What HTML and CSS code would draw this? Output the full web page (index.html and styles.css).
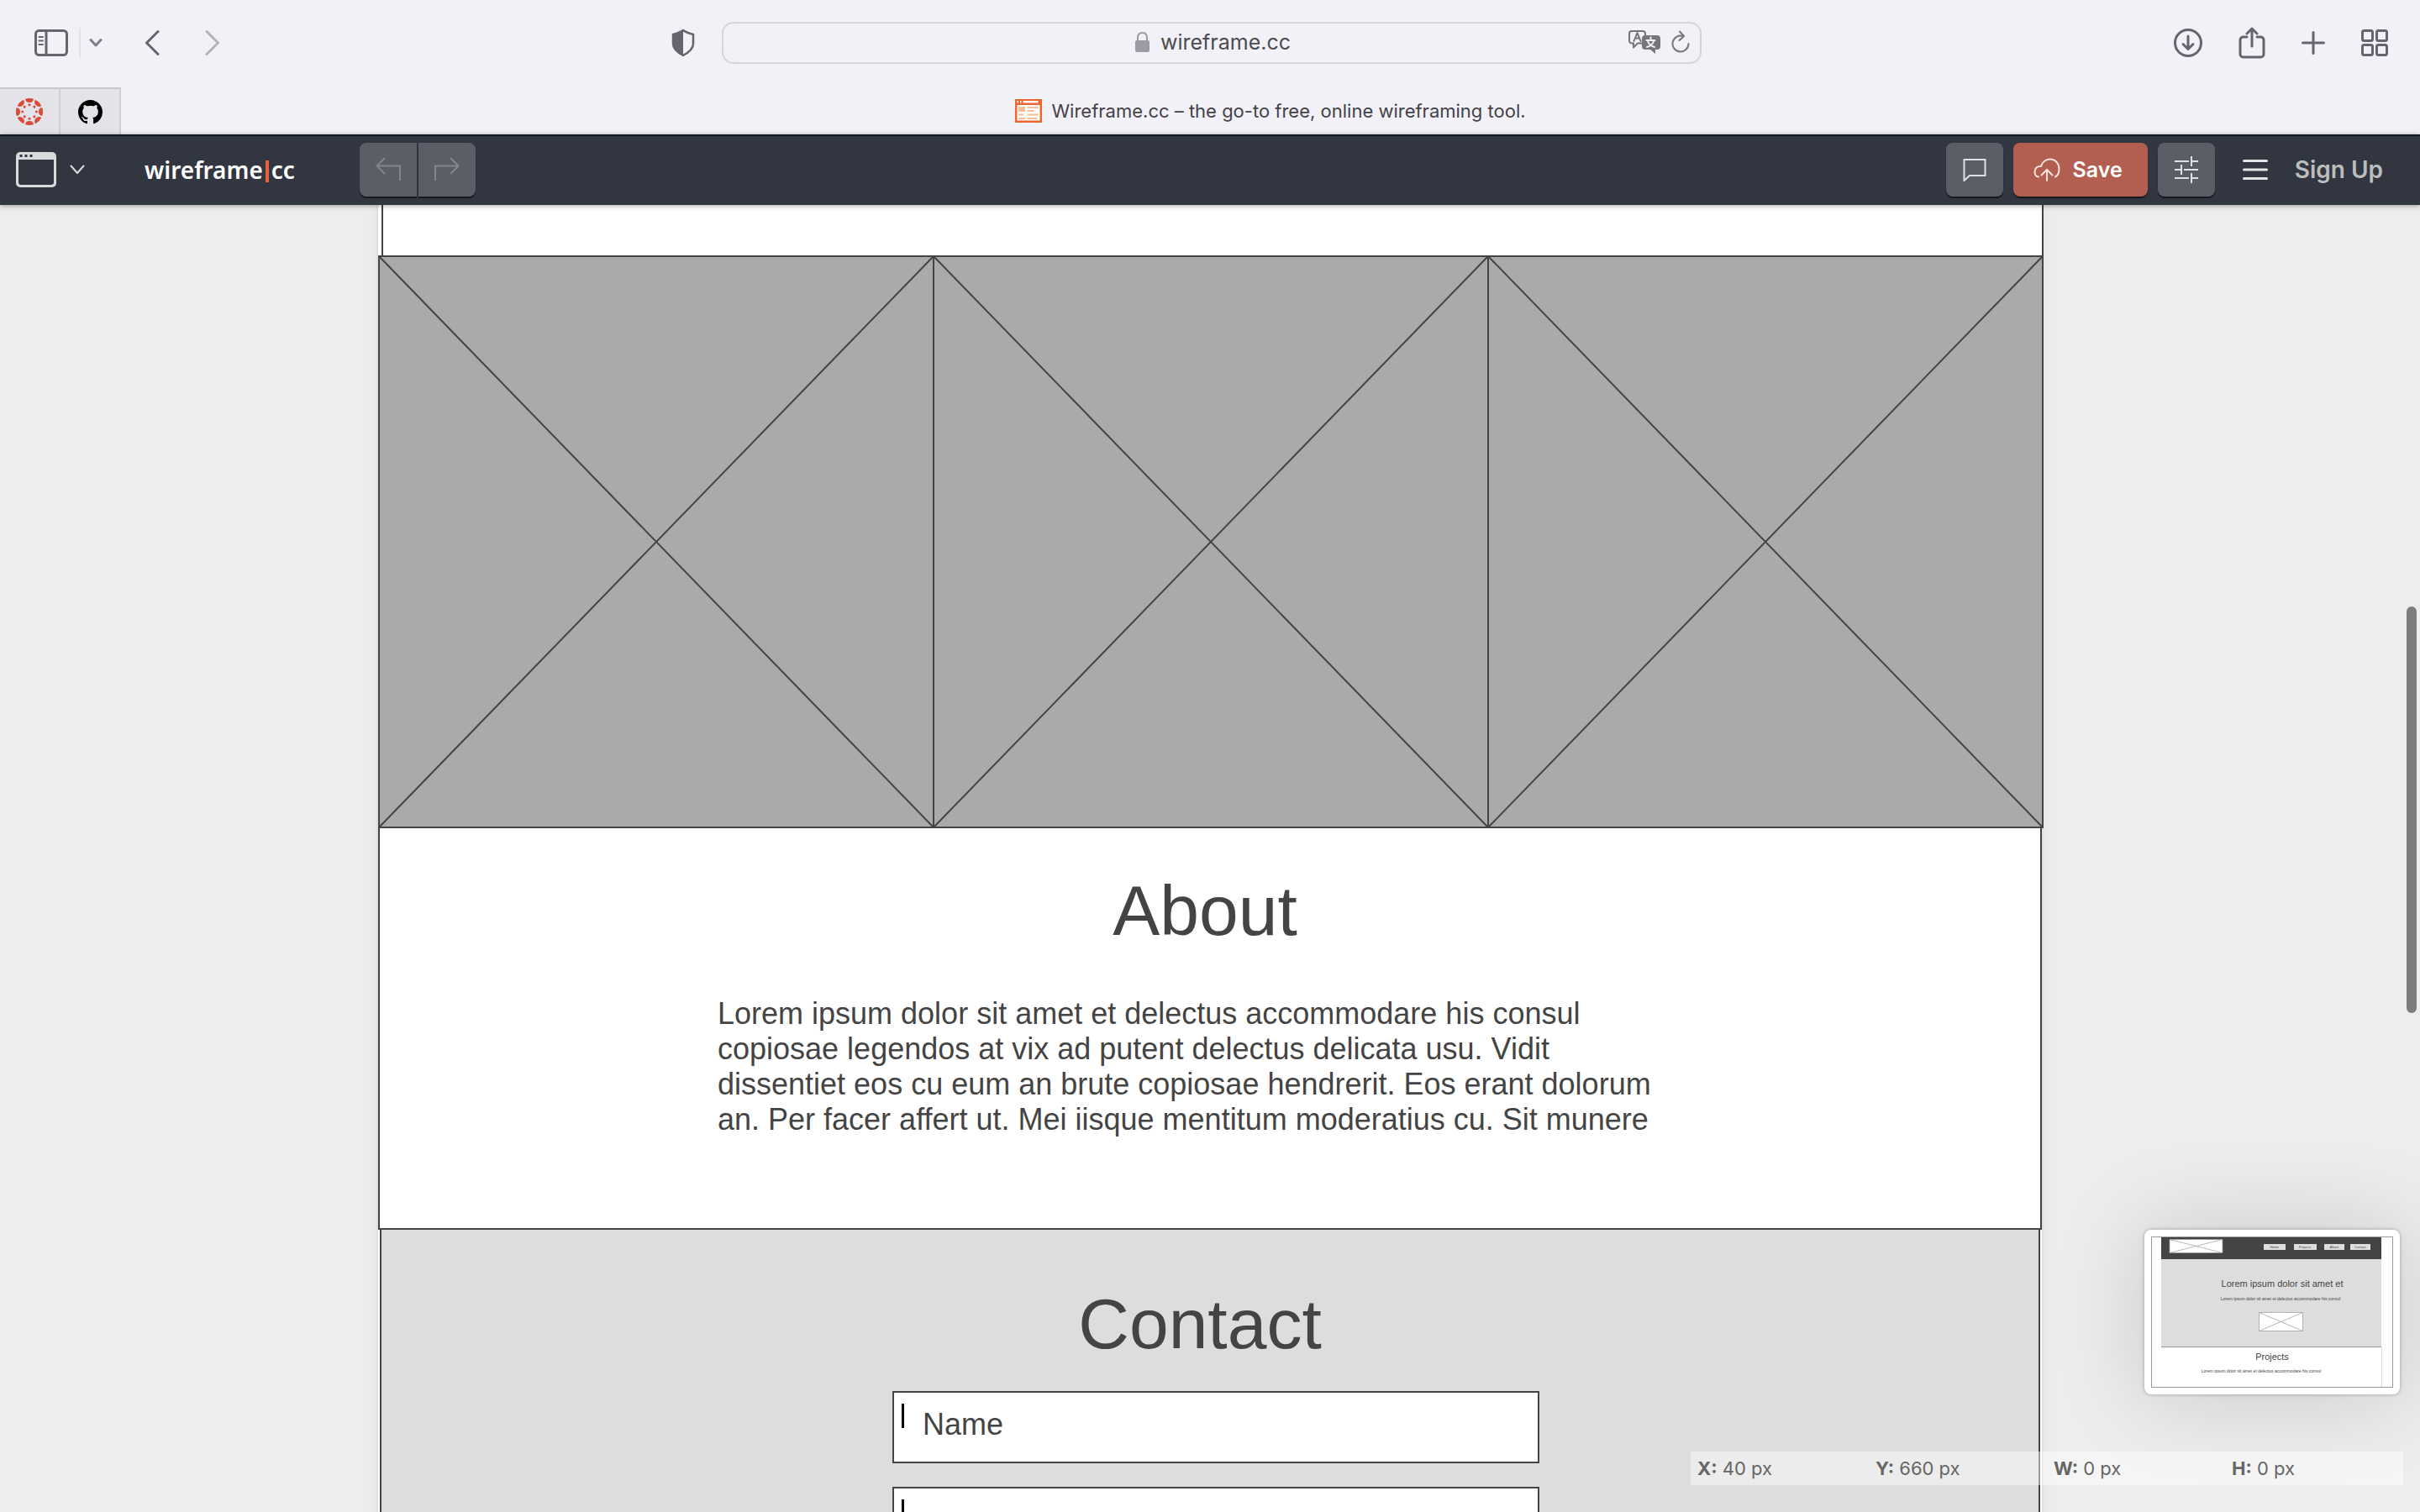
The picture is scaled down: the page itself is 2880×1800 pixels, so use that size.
FILE: index.html
```html
<!DOCTYPE html>
<html lang="en">
<head>
<meta charset="utf-8">
<title>Wireframe.cc – the go-to free, online wireframing tool.</title>
<link rel="stylesheet" href="styles.css">
</head>
<body>
<header class="browser">
  <div class="nav-bar">
    <div class="nav-side nav-left">
      <button class="icon-btn" aria-label="Sidebar"><svg width="40" height="32" viewBox="0 0 40 32"><rect x="1.5" y="1.5" width="37" height="29" rx="4"/><path d="M14 2v28"/><path stroke-width="2" d="M5.500 9h4.500M5.500 13.500h4.500M5.500 18h4.500"/></svg></button>
      <span class="nav-divider"></span>
      <button class="icon-btn" aria-label="Tab groups"><svg width="16" height="12" viewBox="0 0 16 12"><path stroke="#7f7d88" d="M2 2.500l6 6.500 6-6.500"/></svg></button>
      <button class="icon-btn back" aria-label="Back"><svg width="18" height="32" viewBox="0 0 18 32"><path d="M16 2.500L2.500 16 16 29.500"/></svg></button>
      <button class="icon-btn forward" aria-label="Forward"><svg width="18" height="32" viewBox="0 0 18 32"><path stroke="#b3b2b9" d="M2 2.500L15.500 16 2 29.500"/></svg></button>
      <button class="icon-btn shield" aria-label="Privacy report"><svg width="30" height="34" viewBox="0 0 30 34"><path stroke-width="2.500" d="M15 2c4 3 8 4 12 5v11c0 6-5.500 10.500-12 14C8.500 28.500 3 24 3 18V7C7 6 11 5 15 2z"/><path fill="#66646c" stroke="none" d="M15 2C11 5 7 6 3 7v11c0 6 5.500 11 12 14z"/></svg></button>
    </div>
    <div class="address">
      <div class="address-site">
        <svg width="17" height="24" viewBox="0 0 17 24"><rect x="0" y="10" width="17" height="14" rx="2" fill="#9c9aa2"/><path d="M3 11V7c0-3.500 2-6 5.500-6S14 3.500 14 7v4" fill="none" stroke="#9c9aa2" stroke-width="2"/></svg>
        <a href="https://wireframe.cc">wireframe.cc</a>
      </div>
      <div class="address-tools">
        <button class="icon-btn" aria-label="Translate"><svg width="38" height="28" viewBox="0 0 38 28"><path stroke="#77757c" stroke-width="2" d="M16 15.500h-5l-5 5v-5H4a3 3 0 0 1-3-3V4a3 3 0 0 1 3-3h13a3 3 0 0 1 3 3v2M6.500 13l4-10 4 10M8 9.500h5"/><path fill="#77757c" stroke="none" d="M19 6h15a4 4 0 0 1 4 4v9a4 4 0 0 1-4 4h-2v5l-6-5h-7a4 4 0 0 1-3-4v-9a4 4 0 0 1 3-4z"/><path stroke="#f2f1f7" stroke-width="2" d="M26.500 8.500v3M21.500 12h10M23 13c1 3 4 6 8 7M30 13c-1 3-4 6-8 7"/></svg></button>
        <button class="icon-btn" aria-label="Reload"><svg width="22" height="28" viewBox="0 0 22 28"><path stroke="#77757c" stroke-width="2" d="M14 7a9.500 9.500 0 1 0 6.500 9M10 1.500l5 5.500-5.500 5"/></svg></button>
      </div>
    </div>
    <div class="nav-side nav-right">
      <button class="icon-btn" aria-label="Downloads"><svg width="34" height="34" viewBox="0 0 34 34"><circle cx="17" cy="17" r="15.500"/><path d="M17 9v15M11 18.500l6 6 6-6"/></svg></button>
      <button class="icon-btn" aria-label="Share"><svg width="32" height="38" viewBox="0 0 32 38"><path d="M10 12H5.500A3.500 3.500 0 0 0 2 15.500v17A3.500 3.500 0 0 0 5.500 36h21a3.500 3.500 0 0 0 3.500-3.500v-17a3.500 3.500 0 0 0-3.500-3.500H22M16 23V2M10 8l6-6 6 6"/></svg></button>
      <button class="icon-btn" aria-label="New tab"><svg width="28" height="28" viewBox="0 0 28 28"><path d="M14 1.500v25M1.500 14h25"/></svg></button>
      <button class="icon-btn" aria-label="Tab overview"><svg width="32" height="32" viewBox="0 0 32 32"><rect x="1.500" y="1.500" width="12" height="12" rx="2"/><rect x="18.500" y="1.500" width="12" height="12" rx="2"/><rect x="1.500" y="18.500" width="12" height="12" rx="2"/><rect x="18.500" y="18.500" width="12" height="12" rx="2"/></svg></button>
    </div>
  </div>
  <nav class="tabs">
    <a class="pin" href="#canvas-lms" aria-label="Canvas">
      <svg width="32" height="32" viewBox="-16 -16 32 32" fill="#d94b36">
        <defs><g id="seg"><path d="M-5-15.200Q0-16.800 5-15.200Q4.500-11 0-11Q-4.500-11-5-15.200z"/><circle cx="0" cy="-8.300" r="1.500"/></g></defs>
        <use href="#seg"/><use href="#seg" transform="rotate(45)"/><use href="#seg" transform="rotate(90)"/><use href="#seg" transform="rotate(135)"/><use href="#seg" transform="rotate(180)"/><use href="#seg" transform="rotate(225)"/><use href="#seg" transform="rotate(270)"/><use href="#seg" transform="rotate(315)"/>
      </svg>
    </a>
    <a class="pin" href="#github" aria-label="GitHub">
      <svg width="29" height="29" viewBox="0 0 16 16"><path fill="#000" d="M8 0C3.580 0 0 3.580 0 8c0 3.540 2.290 6.530 5.470 7.590.4.070.55-.17.55-.38 0-.19-.01-.82-.01-1.490-2.010.37-2.530-.49-2.690-.94-.09-.23-.48-.94-.82-1.130-.28-.15-.68-.52-.01-.53.63-.01 1.080.58 1.230.82.72 1.210 1.870.87 2.330.66.07-.52.28-.87.51-1.070-1.780-.2-3.640-.89-3.640-3.950 0-.87.31-1.590.82-2.150-.08-.2-.36-1.020.08-2.120 0 0 .67-.21 2.200.82.64-.18 1.320-.27 2-.27s1.360.09 2 .27c1.530-1.040 2.200-.82 2.200-.82.44 1.100.16 1.920.08 2.120.51.56.82 1.270.82 2.150 0 3.070-1.870 3.750-3.650 3.950.29.25.54.73.54 1.480 0 1.070-.01 1.930-.01 2.200 0 .21.15.46.55.38A8.010 8.010 0 0 0 16 8c0-4.420-3.580-8-8-8z"/></svg>
    </a>
    <a class="tab" href="#wireframe">
      <svg width="32" height="28" viewBox="0 0 32 28"><path fill="#ef6532" d="M0 0h32v28H0z"/><path fill="#fff" d="M2.500 2h1.500v2.500H2.500zM6 2h1.500v2.500H6zM9.500 2h18v2.500h-18zM2.500 7h27v18.500h-27z"/><path fill="#f7bd99" d="M4 9h8v6H4zM14.500 9H28v2H14.500zM14.500 13h8v2h-8zM4 17.500h6v2H4zM14.500 17.500H28v2H14.500zM4 22h8v2H4zM14.500 22h12v2h-12z"/></svg>
      <span>Wireframe.cc – the go-to free, online wireframing tool.</span>
    </a>
  </nav>
</header>

<div class="toolbar">
  <button class="icon-btn" aria-label="Window type"><svg width="48" height="42" viewBox="0 0 48 42"><path fill="#d8dadb" stroke="none" fill-rule="evenodd" d="M5 0h38a5 5 0 0 1 5 5v32a5 5 0 0 1-5 5H5a5 5 0 0 1-5-5V5a5 5 0 0 1 5-5zM3 9v27a3 3 0 0 0 3 3h36a3 3 0 0 0 3-3V9zM4.500 3v3h3V3zM10.500 3v3h3V3zM16.500 3v3h3V3z"/></svg></button>
  <button class="icon-btn type-more" aria-label="More window types"><svg width="18" height="12" viewBox="0 0 18 12"><path stroke="#d8dadb" stroke-width="2" d="M1.500 1.500L9 10l7.500-8.500"/></svg></button>
  <a class="logo" href="#home">wireframe<i class="logo-bar"></i>cc</a>
  <div class="history">
    <button class="tool" aria-label="Undo"><svg width="32" height="32" viewBox="0 0 32 32"><path stroke="#85868a" d="M12 2L2.500 11.500 12 21M2.500 11.500H30V29"/></svg></button>
    <button class="tool" aria-label="Redo"><svg width="32" height="32" viewBox="0 0 32 32"><path stroke="#85868a" d="M20 2l9.500 9.500L20 21M29.500 11.500H2V29"/></svg></button>
  </div>
  <div class="actions">
    <button class="tool" aria-label="Comments"><svg width="28" height="28" viewBox="0 0 28 28"><path d="M1.500 2h25v19H8l-6.500 6z"/></svg></button>
    <button class="tool save"><svg width="32" height="28" viewBox="0 0 32 28"><path stroke="#f8e4df" stroke-linecap="round" d="M6 22.500C3 22.500 1.500 19.500 1.500 16.500c0-4 3-7 7.500-6.500C10.500 4.500 15 1.500 20 1.500c6 0 10.500 5 10.500 11.500 0 5-1.500 8-4.500 9.500M16 27V14M9.500 20.500L16 14l6.500 6.500"/></svg>Save</button>
    <button class="tool" aria-label="Settings"><svg width="28" height="32" viewBox="0 0 28 32"><path d="M0 6h17M20 6h8M20 0v12M0 16h7M8 10v12M11 16h17M0 26h17M20 26h8M20 20v12"/></svg></button>
    <button class="icon-btn menu" aria-label="Menu"><svg width="30" height="26" viewBox="0 0 30 26"><path stroke="#e4e5e6" stroke-width="3" d="M1.500 2.500h27M1.500 13h27M1.500 23.500h27"/></svg></button>
    <a class="signup" href="#signup">Sign Up</a>
  </div>
</div>

<main class="workspace">
  <div class="canvas">
    <section class="box-projects"></section>
    <div class="gallery">
      <svg viewBox="0 0 100 100" preserveAspectRatio="none"><path d="M0 0L100 100M100 0L0 100"/></svg>
      <svg viewBox="0 0 100 100" preserveAspectRatio="none"><path d="M0 0L100 100M100 0L0 100"/></svg>
      <svg viewBox="0 0 100 100" preserveAspectRatio="none"><path d="M0 0L100 100M100 0L0 100"/></svg>
    </div>
    <section class="box-about">
      <div class="about-text">
        <h2>About</h2>
        <p>Lorem ipsum dolor sit amet et delectus accommodare his consul copiosae legendos at vix ad putent delectus delicata usu. Vidit dissentiet eos cu eum an brute copiosae hendrerit. Eos erant dolorum an. Per facer affert ut. Mei iisque mentitum moderatius cu. Sit munere</p>
      </div>
    </section>
    <section class="box-contact">
      <h2>Contact</h2>
      <form class="contact-form">
        <label class="field"><input type="text" placeholder="Name" aria-label="Name"><span class="caret"></span></label>
        <label class="field field-email"><input type="email" placeholder="E-mail" aria-label="E-mail"><span class="caret"></span></label>
      </form>
    </section>
  </div>
  <div class="minimap">
    <svg viewBox="0 0 288 180" font-family="'Liberation Sans', Arial, sans-serif" fill="#444" text-anchor="middle">
      <path fill="#444" d="M12 1h262v28H12z"/>
      <path fill="#ddd" d="M12 27h262v105H12z"/>
      <path fill="none" stroke="#999" d="M12 131.500h262"/>
      <path fill="none" stroke="#ddd" d="M274.500 132v47"/>
      <g fill="#fff" stroke="#999" stroke-width=".7"><path d="M22 3.500h63v16H22zl63 16M85 3.500l-63 16"/><path d="M128.500 90.500h52v22h-52zl52 22M180.500 90.500l-52 22"/></g>
      <path fill="#ddd" d="M134 9h26v7h-26zM170 9h27v7h-27zM206 9h24v7h-24zM237 9h24v7h-24z"/>
      <g font-size="4"><text x="147" y="14">Home</text><text x="183" y="14">Projects</text><text x="218" y="14">About</text><text x="249" y="14">Contact</text></g>
      <g font-size="11"><text x="156" y="60">Lorem ipsum dolor sit amet et</text><text x="144" y="147">Projects</text></g>
      <g font-size="5"><text x="154" y="76">Lorem ipsum dolor sit amet et delectus accommodare his consul</text><text x="131" y="162">Lorem ipsum dolor sit amet et delectus accommodare his consul</text></g>
      <rect x=".5" y=".5" width="287" height="179" fill="none" stroke="#999"/>
    </svg>
  </div>
  <div class="status">
    <span><b>X:</b> 40 px</span><span><b>Y:</b> 660 px</span><span><b>W:</b> 0 px</span><span><b>H:</b> 0 px</span>
  </div>
  <div class="scroll-thumb"></div>
</main>
</body>
</html>
```
FILE: styles.css
```css
* { box-sizing: border-box; }

body {
  margin: 0;
  height: 100vh;
  display: flex;
  flex-direction: column;
  overflow: hidden;
  font-family: Inter, "Liberation Sans", sans-serif;
  background: #ededed;
}

a { color: inherit; text-decoration: none; }
svg { display: block; flex: none; }
button { font: inherit; border: 0; padding: 0; background: none; }

.icon-btn { display: flex; flex: none; }
.icon-btn svg {
  fill: none;
  stroke: #66646c;
  stroke-width: 3;
  stroke-linecap: round;
  stroke-linejoin: round;
}

/* Browser chrome */
.browser { background: #f2f1f7; }

.nav-bar { display: flex; align-items: center; height: 104px; padding: 0 2px 2px 0; }
.nav-side { flex: 1; display: flex; align-items: center; }
.nav-left { padding-left: 41px; }
.nav-divider { width: 2px; height: 36px; margin: 0 10px 0 13px; background: #e3e2e8; }
.back { margin-left: 50px; }
.forward { margin-left: 54px; }
.shield { margin: 0 31px 0 auto; }
.nav-right { justify-content: flex-end; gap: 43px; padding-right: 36px; }

.address {
  width: 1166px;
  height: 50px;
  display: grid;
  grid-template-columns: 100px 1fr 100px;
  align-items: center;
  padding-bottom: 2px;
  border: 2px solid #d6d5da;
  border-radius: 14px;
}
.address-site {
  grid-column: 2;
  display: flex;
  align-items: center;
  justify-content: center;
  gap: 13px;
  padding-left: 4px;
  font-size: 25px;
  color: #4c4b50;
}
.address-tools { display: flex; align-items: center; justify-content: flex-end; gap: 13px; padding-right: 12px; }

.tabs { display: flex; height: 56px; }
.pin {
  width: 72px;
  display: flex;
  align-items: center;
  justify-content: center;
  background: #e4e3e9;
  border-top: 2px solid #c8c7cd;
  border-right: 2px solid #d0cfd5;
}
.tab {
  flex: 1;
  display: flex;
  align-items: center;
  justify-content: center;
  gap: 11px;
  font-size: 22px;
  color: #434247;
}

/* Editor toolbar */
.toolbar {
  position: relative;
  z-index: 2;
  display: flex;
  align-items: center;
  height: 84px;
  padding: 0 44px 2px 19px;
  border-top: 2px solid #10171f;
  background: #323641;
  box-shadow: 0 1px 6px rgba(0, 0, 0, .35);
}
.type-more { margin-left: 16px; }
.logo {
  display: flex;
  align-items: center;
  width: 256px;
  margin-left: 71px;
  font: 600 28px "Noto Sans", "Open Sans", sans-serif;
  color: #fff;
}
.logo-bar { width: 4px; height: 26px; margin: 4px 3px 0; background: #e8623f; }
.history { display: flex; gap: 2px; }
.history .tool:first-child { border-radius: 8px 0 0 8px; }
.history .tool:last-child { border-radius: 0 8px 8px 0; }
.tool {
  width: 68px;
  height: 64px;
  display: flex;
  align-items: center;
  justify-content: center;
  border-radius: 8px;
  background: #5a5e67;
  box-shadow: 0 2px 1px #15181d;
}
.tool svg { fill: none; stroke: #e0e1e3; stroke-width: 2; }
.actions { display: flex; align-items: center; gap: 12px; margin-left: auto; }
.save {
  width: 160px;
  gap: 15px;
  padding-right: 6px;
  background: #b25e50;
  color: #fff;
  font-size: 25px;
  font-weight: 600;
}
.menu { margin: 0 20px 0 21px; }
.signup { font-size: 28px; font-weight: 600; color: #bcbdbd; }

/* Wireframe canvas */
.workspace { position: relative; flex: 1; overflow: hidden; }
.canvas {
  max-width: 1980px;
  margin: 0 auto;
  background: #fff;
  box-shadow: 0 0 0 2px #dfdfdf, 0 0 16px rgba(0, 0, 0, .05);
  font-family: "Liberation Sans", Arial, sans-serif;
  color: #444;
}
.canvas h2 { margin: 0; font-size: 84px; font-weight: 400; line-height: 96px; text-align: center; }

.box-projects {
  height: 60px;
  margin: 0 -2px 0 4px;
  border: solid #444;
  border-width: 0 2px;
  background: #fff;
}
.gallery {
  display: grid;
  grid-template-columns: repeat(3, 1fr);
  gap: 2px;
  margin-right: -2px;
  border: 2px solid #444;
  background: #444;
}
.gallery svg { width: 100%; aspect-ratio: 658 / 678; background: #aaa; }
.gallery path { stroke: #444; stroke-width: 2; vector-effect: non-scaling-stroke; }

.box-about { padding: 50px 0 108px; border: solid #444; border-width: 0 2px 2px; }
.about-text { max-width: 1172px; margin: 0 auto; padding-right: 12px; }
.about-text p { max-width: 1144px; margin: 54px 0 0; font-size: 36px; line-height: 42px; }

.box-contact {
  margin: 0 2px;
  padding: 64px 0 60px;
  border: solid #444;
  border-width: 0 2px 2px;
  background: #ddd;
}
.box-contact h2 { padding-right: 24px; }
.contact-form {
  display: flex;
  flex-direction: column;
  align-items: center;
  gap: 28px;
  margin-top: 32px;
  padding-left: 14px;
}
.field { position: relative; width: 100%; max-width: 770px; }
.field input {
  display: block;
  width: 100%;
  height: 86px;
  padding: 0 34px 6px;
  border: 2px solid #444;
  border-radius: 0;
  background: #fff;
  font: 36px "Liberation Sans", Arial, sans-serif;
}
.field input::placeholder { color: #444; opacity: 1; }
.field-email input { padding: 6px 34px 0; }
.caret { position: absolute; left: 11px; top: 15px; width: 3px; height: 29px; background: #000; }

/* Overlays */
.minimap {
  position: absolute;
  right: 24px;
  bottom: 140px;
  width: 304px;
  padding: 8px;
  border-radius: 8px;
  background: #fff;
  box-shadow: 0 0 4px rgba(0, 0, 0, .3), 0 0 110px rgba(0, 0, 0, .16);
}
.status {
  position: absolute;
  right: 20px;
  bottom: 32px;
  display: grid;
  grid-template-columns: repeat(4, 212px);
  font-size: 22px;
  line-height: 40px;
  color: #666;
  background: rgba(255, 255, 255, .45);
}
.status span { padding-left: 8px; }
.scroll-thumb {
  position: absolute;
  right: 4px;
  top: 478px;
  width: 12px;
  height: 484px;
  border-radius: 6px;
  background: #7d7d7d;
}
```
